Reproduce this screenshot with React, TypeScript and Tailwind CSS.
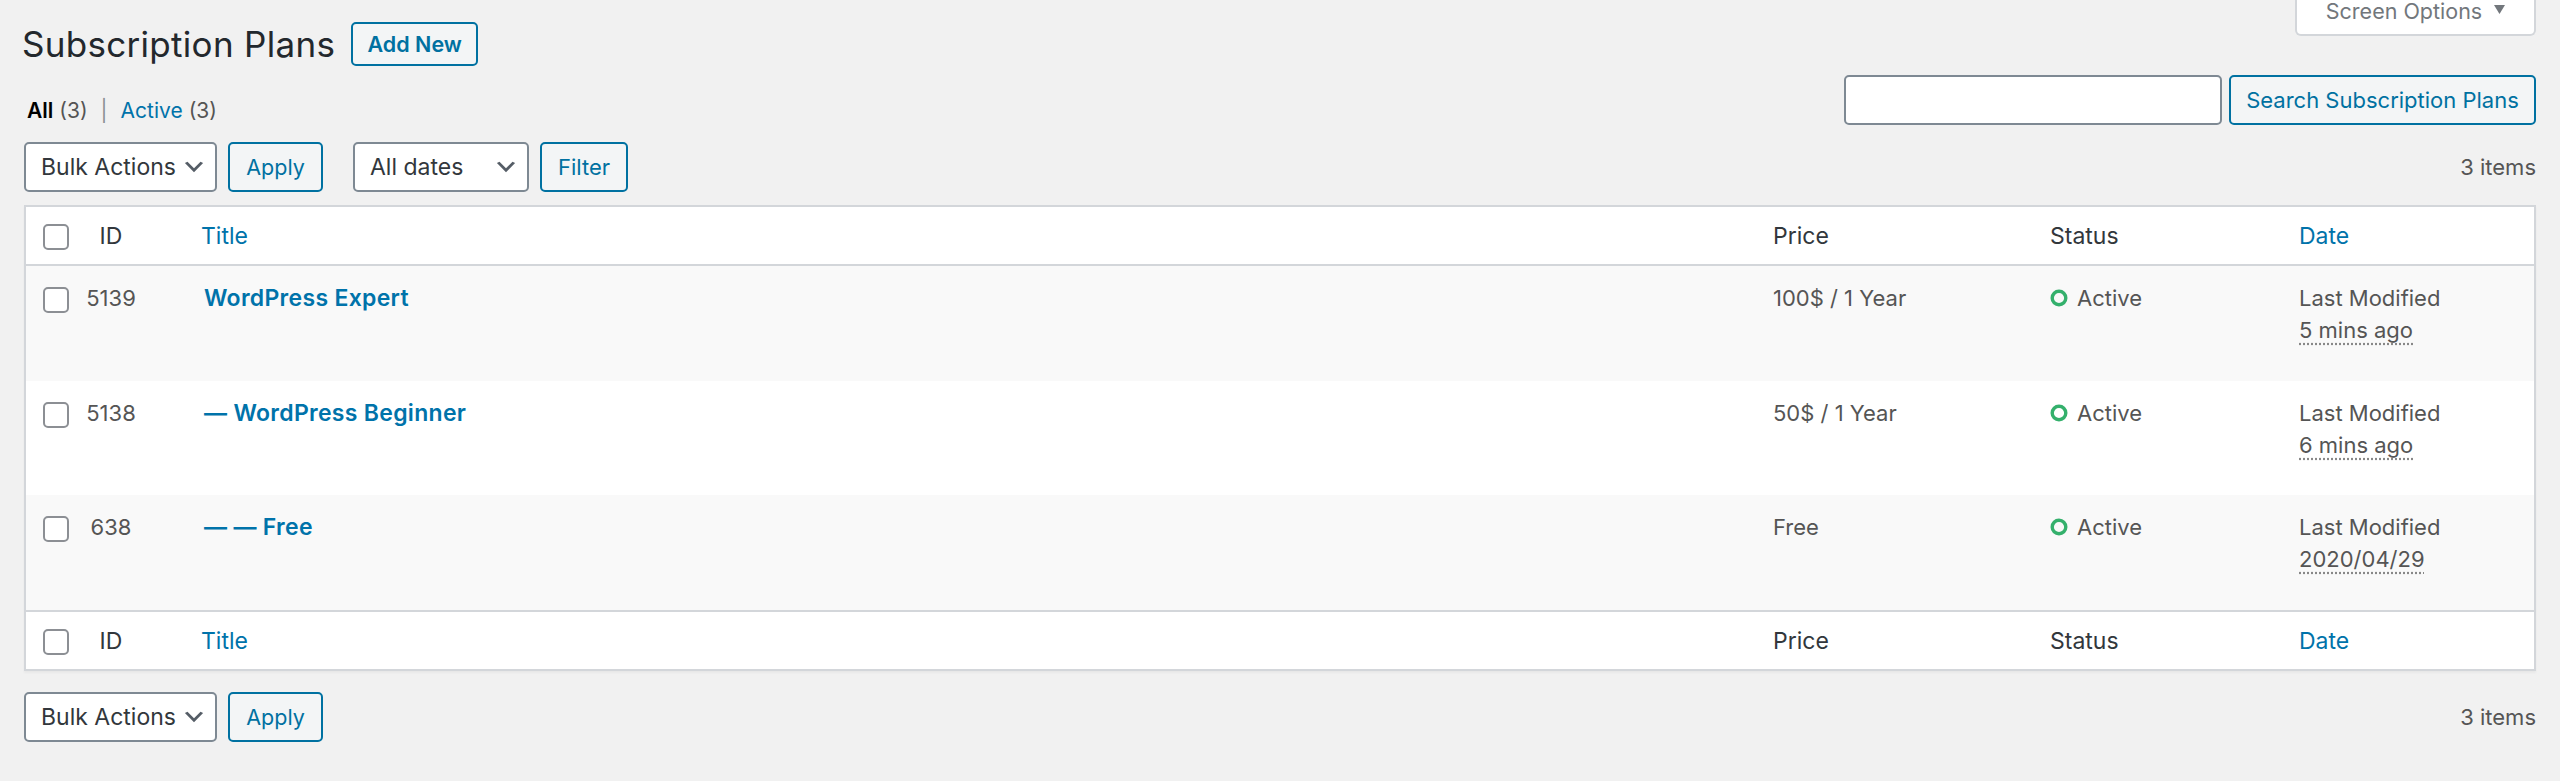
import React from "react";

const Chevron = () => (
  <svg width="26" height="26" viewBox="0 0 20 20" className="shrink-0">
    <path d="M5 6l5 5 5-5 2 1-7 7-7-7 2-1z" fill="#555d66" />
  </svg>
);

const Checkbox = () => (
  <span className="block w-[26px] h-[26px] rounded-[5px] border-2 border-[#8c8f94] bg-white" />
);

const StatusDot = () => (
  <svg width="18" height="18" viewBox="0 0 18 18" className="shrink-0">
    <circle cx="9" cy="9" r="6.8" fill="none" stroke="#34b06c" strokeWidth="3.4" />
  </svg>
);

function BulkBar() {
  return (
    <div className="flex items-center gap-[11px]">
      <div className="flex items-center justify-between w-[193px] h-[50px] rounded-[5px] border-2 border-[#7e8993] bg-white pl-[15px] pr-[8px] text-[23px] text-[#32373c]">
        <span>Bulk Actions</span>
        <Chevron />
      </div>
      <div className="flex items-center justify-center w-[95px] h-[50px] rounded-[5px] border-2 border-[#0071a1] bg-[#f3f5f6] text-[21.5px] text-[#0071a1]">
        Apply
      </div>
    </div>
  );
}

const rows = [
  { id: "5139", title: "WordPress Expert", price: "100$ / 1 Year", date: "5 mins ago", striped: true, h: "h-[115px]" },
  { id: "5138", title: "— WordPress Beginner", price: "50$ / 1 Year", date: "6 mins ago", striped: false, h: "h-[114px]" },
  { id: "638", title: "— — Free", price: "Free", date: "2020/04/29", striped: true, h: "h-[115px]" },
];

function HeaderRow({ top }: { top: boolean }) {
  return (
    <div
      className={`grid grid-cols-[54px_62px_1fr_277px_249px_251px] h-[59px] items-center bg-white text-[23px] text-[#32373c] ${
        top ? "border-b-2 border-[#d3d6da]" : "border-t-2 border-[#d3d6da]"
      }`}
    >
      <div className="pl-[17px] flex items-center pt-[3px]">
        <Checkbox />
      </div>
      <div className="text-center">ID</div>
      <div className="pl-[59px] text-[#0073aa]">Title</div>
      <div className="pl-[16px]">Price</div>
      <div className="pl-[16px]">Status</div>
      <div className="pl-[16px] text-[#0073aa]">Date</div>
    </div>
  );
}

export default function App() {
  return (
    <div className="w-full min-h-[781px] bg-[#f1f1f1] px-[24px] font-['Inter',sans-serif] text-[21px] leading-[32px] text-[#555]">
      <div className="flex justify-between">
        <div className="flex flex-col">
          <div className="flex items-center mt-[22px] h-[44px]">
            <h1 className="text-[35px] leading-[44px] font-normal text-[#23282d] -ml-[2px] tracking-[0.3px]">
              Subscription Plans
            </h1>
            <div className="ml-[16px] flex items-center justify-center w-[127px] h-[44px] rounded-[5px] border-2 border-[#0071a1] bg-[#f3f5f6] text-[21.5px] font-semibold text-[#0071a1]">
              Add New
            </div>
          </div>
          <div className="mt-[29px] pl-[3px] flex items-center">
            <span className="text-black font-semibold">All</span>
            <span className="ml-[6px] text-[#555]">(3)</span>
            <span className="mx-[13px] text-[#8c8f94]">|</span>
            <span className="text-[#0073aa]">Active</span>
            <span className="ml-[6px] text-[#555]">(3)</span>
          </div>
        </div>
        <div className="flex flex-col items-end">
          <div className="flex items-start justify-center gap-[12px] w-[241px] h-[36px] bg-white border-2 border-t-0 border-[#d3d6da] rounded-b-[6px] text-[21.5px] leading-[22px] text-[#72777c]">
            <span>Screen Options</span>
            <svg width="11" height="10" viewBox="0 0 11 10" className="mt-[5px]">
              <polygon points="0,0 11,0 5.5,9" fill="#72777c" />
            </svg>
          </div>
          <div className="mt-[39px] flex items-center gap-[7px]">
            <div className="w-[378px] h-[50px] rounded-[5px] border-2 border-[#7e8993] bg-white" />
            <div className="flex items-center justify-center w-[307px] h-[50px] rounded-[5px] border-2 border-[#0071a1] bg-[#f3f5f6] text-[22px] text-[#0071a1]">
              Search Subscription Plans
            </div>
          </div>
        </div>
      </div>

      <div className="mt-[15px] flex items-center h-[50px]">
        <BulkBar />
        <div className="ml-[30px] flex items-center gap-[11px]">
          <div className="flex items-center justify-between w-[176px] h-[50px] rounded-[5px] border-2 border-[#7e8993] bg-white pl-[15px] pr-[8px] text-[23px] text-[#32373c]">
            <span>All dates</span>
            <Chevron />
          </div>
          <div className="flex items-center justify-center w-[88px] h-[50px] rounded-[5px] border-2 border-[#0071a1] bg-[#f3f5f6] text-[22px] text-[#0071a1]">
            Filter
          </div>
        </div>
        <div className="ml-auto text-[22px] text-[#555]">3 items</div>
      </div>

      <div className="mt-[13px] border-2 border-[#d3d6da] bg-white shadow-[0_2px_2px_rgba(0,0,0,0.04)]">
        <HeaderRow top={true} />
        {rows.map((r) => (
          <div
            key={r.id}
            className={`grid grid-cols-[54px_62px_1fr_277px_249px_251px] ${r.h} text-[22px] ${
              r.striped ? "bg-[#f9f9f9]" : "bg-white"
            }`}
          >
            <div className="pl-[17px] pt-[21px]">
              <Checkbox />
            </div>
            <div className="pt-[16px] text-center text-[#555]">{r.id}</div>
            <div className="pt-[16px] pl-[62px] text-[23px] tracking-[0.3px] font-semibold text-[#0073aa]">{r.title}</div>
            <div className="pt-[16px] pl-[16px] text-[#555]">{r.price}</div>
            <div className="pt-[16px] pl-[16px] text-[#555]">
              <div className="flex items-center gap-[9px]">
                <StatusDot />
                <span>Active</span>
              </div>
            </div>
            <div className="pt-[16px] pl-[16px] text-[#555] flex flex-col">
              <span>Last Modified</span>
              <span className="underline decoration-dotted decoration-[#888] underline-offset-[5px] self-start">
                {r.date}
              </span>
            </div>
          </div>
        ))}
        <HeaderRow top={false} />
      </div>

      <div className="mt-[21px] flex items-center h-[50px]">
        <BulkBar />
        <div className="ml-auto text-[22px] text-[#555]">3 items</div>
      </div>
    </div>
  );
}
